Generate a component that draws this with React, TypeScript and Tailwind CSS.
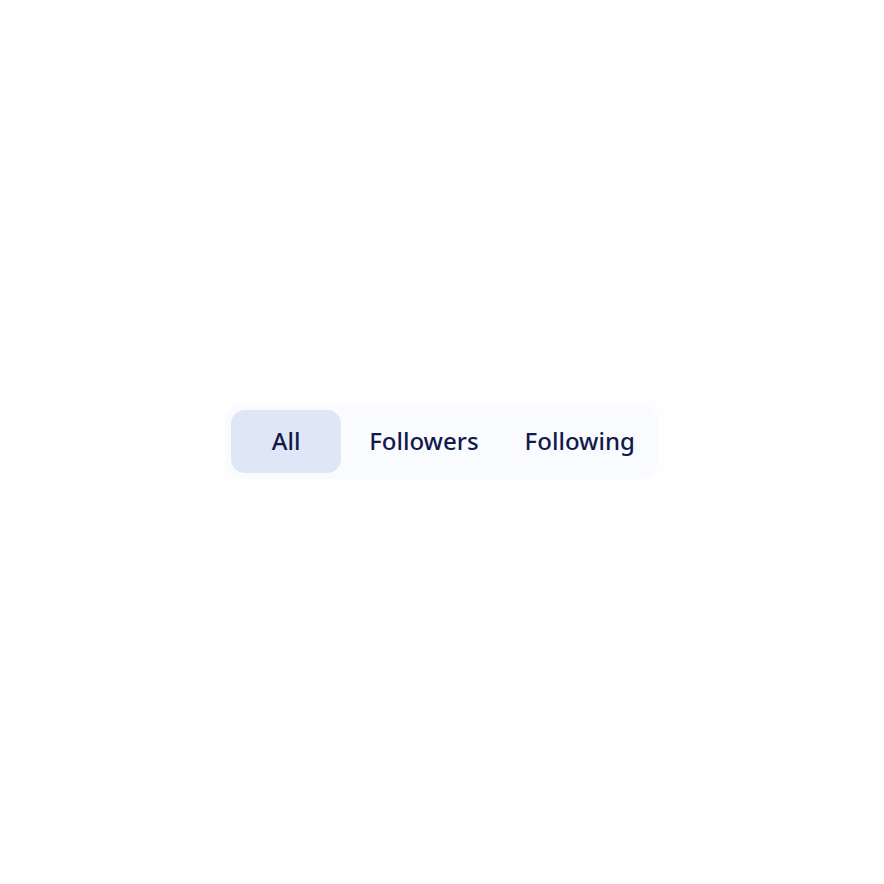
import { useState } from "react";

const tabs = ["All", "Followers", "Following"];

export default function App() {
  const [active, setActive] = useState("All");
  return (
    <main className="flex min-h-screen items-center justify-center bg-[#fefefe] pb-0.5 font-['Noto_Sans','Open_Sans',sans-serif]">
      <div role="tablist" aria-label="People" className="flex gap-2.5 rounded-[20px] bg-[#f9fbff] p-1.5">
        {tabs.map((tab) => (
          <button
            key={tab}
            type="button"
            role="tab"
            aria-selected={active === tab}
            onClick={() => setActive(tab)}
            className={`h-[63px] min-w-[110px] cursor-pointer rounded-[14px] px-[18px] text-2xl leading-8 font-medium text-[#121a4b] ${
              active === tab ? "bg-[#dfe6f6]" : "bg-transparent"
            }`}
          >
            {tab}
          </button>
        ))}
      </div>
    </main>
  );
}
